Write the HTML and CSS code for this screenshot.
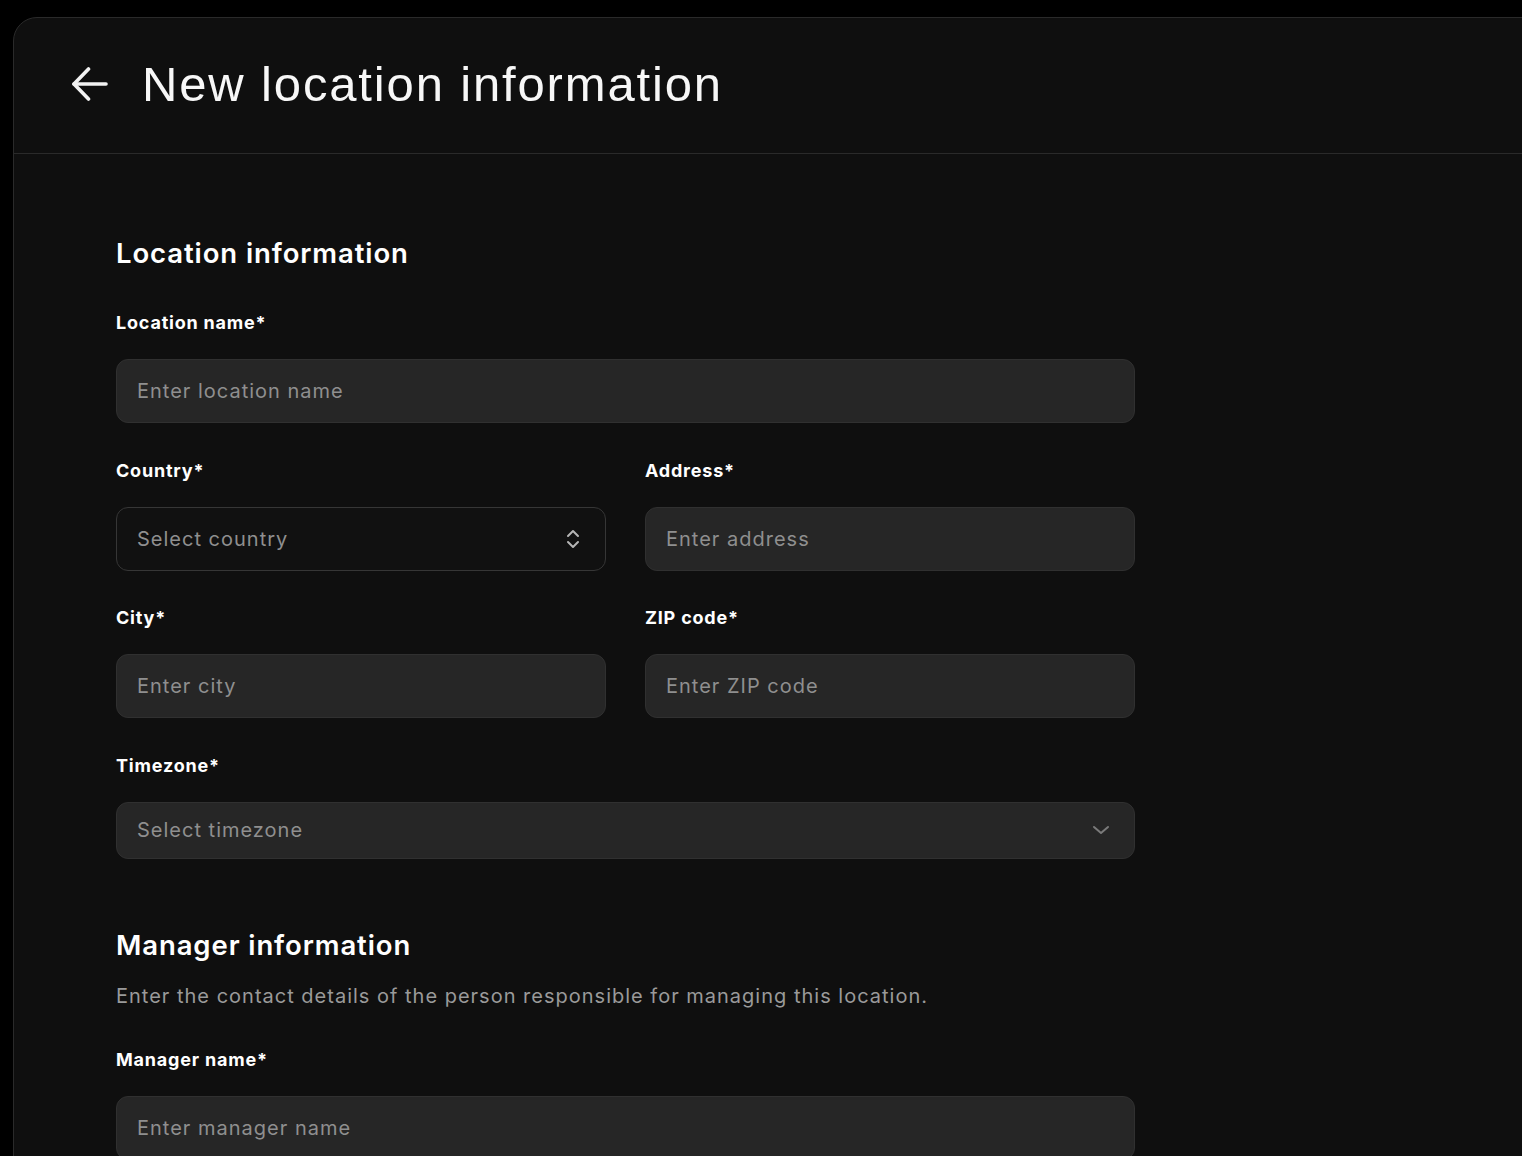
FILE: index.html
```html
<!DOCTYPE html>
<html lang="en">
<head>
  <meta charset="UTF-8" />
  <meta name="viewport" content="width=device-width, initial-scale=1.0"/>
  <title>New location information</title>
  <link rel="stylesheet" href="styles.css">
</head>
<body>
  <div class="panel">
    <header class="page-header">
      <button class="back-btn" aria-label="Back">
        <svg width="38" height="36" viewBox="0 0 38 36" fill="none" stroke="currentColor" stroke-width="3.6" stroke-linecap="round" stroke-linejoin="round">
          <path d="M35 17H3"/>
          <path d="M17.5 2L3 17l14.5 15"/>
        </svg>
      </button>
      <h1 class="page-title">New location information</h1>
    </header>

    <main class="form-wrap">
      <section class="form-section">
        <h2 class="section-title">Location information</h2>

        <div class="field">
          <label class="field-label">Location name*</label>
          <input class="input" type="text" placeholder="Enter location name">
        </div>

        <div class="field-row">
          <div class="field">
            <label class="field-label">Country*</label>
            <div class="select select-outline">
              <span class="select-text">Select country</span>
              <svg width="16" height="22" viewBox="0 0 16 22" fill="none" stroke="currentColor" stroke-width="2" stroke-linecap="round" stroke-linejoin="round">
                <path d="M3 8l5-5 5 5"/>
                <path d="M3 14l5 5 5-5"/>
              </svg>
            </div>
          </div>
          <div class="field">
            <label class="field-label">Address*</label>
            <input class="input" type="text" placeholder="Enter address">
          </div>
        </div>

        <div class="field-row">
          <div class="field">
            <label class="field-label">City*</label>
            <input class="input" type="text" placeholder="Enter city">
          </div>
          <div class="field">
            <label class="field-label">ZIP code*</label>
            <input class="input" type="text" placeholder="Enter ZIP code">
          </div>
        </div>

        <div class="field">
          <label class="field-label">Timezone*</label>
          <div class="select select-filled">
            <span class="select-text">Select timezone</span>
            <svg width="18" height="12" viewBox="0 0 18 12" fill="none" stroke="currentColor" stroke-width="2" stroke-linecap="round" stroke-linejoin="round">
              <path d="M2 3l7 6 7-6"/>
            </svg>
          </div>
        </div>
      </section>

      <section class="form-section">
        <h2 class="section-title">Manager information</h2>
        <p class="section-desc">Enter the contact details of the person responsible for managing this location.</p>

        <div class="field">
          <label class="field-label">Manager name*</label>
          <input class="input" type="text" placeholder="Enter manager name">
        </div>
      </section>
    </main>
  </div>
</body>
</html>
```

FILE: styles.css
```css
:root {
  --page-bg: #000;
  --panel-bg: #0f0f0f;
  --line: #2a2a2a;
  --input-bg: #262626;
  --input-border: #303030;
  --text: #fff;
  --muted: #8f8f8f;
}

* {
  margin: 0;
  padding: 0;
  box-sizing: border-box;
}

body {
  background: var(--page-bg);
  color: var(--text);
  font-family: Inter, "Noto Sans", sans-serif;
  overflow: hidden;
}

.panel {
  margin: 17px -60px 0 13px;
  min-height: 1300px;
  background: var(--panel-bg);
  border: 1px solid var(--line);
  border-radius: 24px 0 0 0;
}

.page-header {
  display: flex;
  align-items: center;
  gap: 33px;
  height: 136px;
  padding: 0 0 2px 57px;
  border-bottom: 1px solid var(--line);
}

.back-btn {
  display: flex;
  background: none;
  border: none;
  color: #f2f2f2;
  cursor: pointer;
}

.page-title {
  font-family: "Liberation Sans", Arial, sans-serif;
  font-weight: 400;
  font-size: 49px;
  line-height: 1;
  letter-spacing: 1.85px;
  color: #f7f7f7;
}

.form-wrap {
  width: 1121px;
  padding: 81px 0 0 102px;
}

.form-section + .form-section {
  margin-top: 68.5px;
}

.section-title {
  font-size: 27.5px;
  font-weight: 600;
  line-height: 36px;
  letter-spacing: 0.9px;
  margin-bottom: 40px;
}

.section-desc {
  font-size: 20px;
  line-height: 28px;
  letter-spacing: 1px;
  color: #9a9a9a;
  margin: -21px 0 38px;
}

.field {
  display: flex;
  flex-direction: column;
  margin-bottom: 35.5px;
}

.field-row {
  display: grid;
  grid-template-columns: 1fr 1fr;
  gap: 39px;
}

.field-label {
  font-size: 18px;
  font-weight: 700;
  line-height: 24px;
  letter-spacing: 0.8px;
  margin-bottom: 24px;
}

.input,
.select {
  height: 64px;
  padding: 0 20px;
  border-radius: 12px;
  font-family: Inter, "Noto Sans", sans-serif;
  font-size: 20px;
  letter-spacing: 1px;
}

.input {
  background: var(--input-bg);
  border: 1px solid var(--input-border);
  color: var(--text);
  outline: none;
}

.input::placeholder {
  color: var(--muted);
}

.select {
  display: flex;
  align-items: center;
  justify-content: space-between;
  color: var(--muted);
}

.select-outline {
  background: #111;
  border: 1px solid #363636;
}

.select-outline svg {
  color: #b5b5b5;
  margin-right: 4px;
}

.select-filled {
  height: 57px;
  background: var(--input-bg);
  border: 1px solid var(--input-border);
}

.select-filled svg {
  color: #7a7a7a;
  margin-right: 4px;
}
```
